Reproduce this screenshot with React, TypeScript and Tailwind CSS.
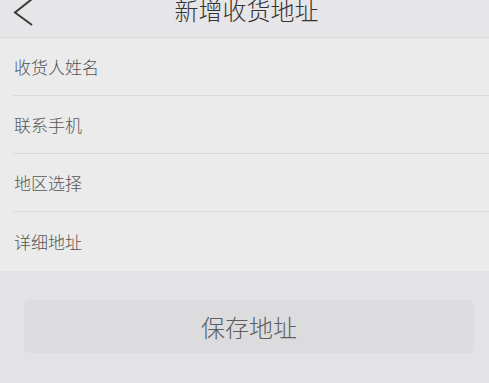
const fields = ["收货人姓名", "联系手机", "地区选择", "详细地址"];

export default function App() {
  return (
    <div className="w-[489px] h-[383px] overflow-hidden bg-[#e3e2e5] flex flex-col font-['Noto_Sans_CJK_SC',sans-serif]">
      {/* header */}
      <div className="h-[38px] shrink-0 bg-[#e6e5e8] border-b border-[#dad9dc] relative flex justify-center">
        <button className="absolute left-[12px] top-0">
          <svg width="24" height="26" viewBox="0 0 24 26" fill="none">
            <path d="M20 -1 L3 12.5 L20 25" stroke="#3a3a3a" strokeWidth="2" />
          </svg>
        </button>
        <h1 className="text-[24px] leading-[24px] -mt-[2px] pl-[4px] font-light text-[#333]">新增收货地址</h1>
      </div>

      {/* form */}
      <div className="bg-[#ebebeb] flex flex-col">
        {fields.map((f, i) => (
          <div
            key={f}
            className={
              i < fields.length - 1
                ? "ml-[13px] h-[58px] flex items-center border-b border-[#dadada]"
                : "ml-[13px] h-[59px] flex items-center"
            }
          >
            <span className="pl-[1px] text-[17px] font-light text-[#555]">{f}</span>
          </div>
        ))}
      </div>

      {/* save */}
      <div className="pl-[24px] pr-[15px] pt-[29px]">
        <button className="w-full h-[53px] rounded-[6px] bg-[#dcdbde] text-[24px] font-light text-[#5f5f5f] flex items-center justify-center">
          保存地址
        </button>
      </div>
    </div>
  );
}
